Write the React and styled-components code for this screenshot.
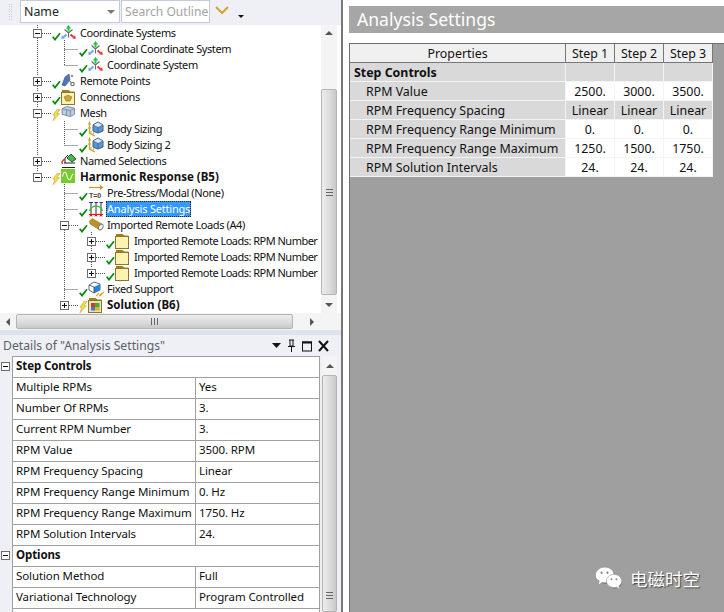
import React from 'react';
import styled, { createGlobalStyle } from 'styled-components';

const Global = createGlobalStyle`
  html, body { margin: 0; padding: 0; width: 724px; height: 612px; overflow: hidden; background: #fff; }
  #root { width: 724px; height: 612px; }
  * { box-sizing: border-box; }
`;

const FONT = `"Noto Sans", Tahoma, "Noto Sans CJK SC", sans-serif`;

const Page = styled.div`
  display: flex; width: 724px; height: 612px; overflow: hidden; background: #fff; position: relative;
  font-family: ${FONT}; color: #111;
`;
const LeftPane = styled.div`
  width: 341px; flex: none; display: flex; flex-direction: column; background: #eef0f6;
`;
const Toolbar = styled.div`
  height: 25px; flex: none; display: flex; align-items: flex-start; background: #eef0f6; padding-left: 8px;
`;
const Grip = styled.div`
  width: 5px; height: 18px; margin: 3px 7px 0 0;
  background-image: radial-gradient(#a9adb8 0.7px, transparent 0.8px);
  background-size: 2.5px 2.5px;
`;
const NameSelect = styled.div`
  width: 100px; height: 23px; background: #fff; border: 1px solid #c6cbdc; display: flex; align-items: center;
  justify-content: space-between; padding: 0 4px 0 3px; font-size: 12.4px; color: #222;
`;
const SelectCaret = styled.span`
  width: 0; height: 0; border-left: 4px solid transparent; border-right: 4px solid transparent; border-top: 4px solid #777;
`;
const SearchBox = styled.div`
  width: 89px; height: 23px; margin-left: 1px; background: #fff; border: 1px solid #c6cbdc; display: flex; align-items: center;
  padding-left: 3px; font-size: 12.1px; color: #a3a3a3; white-space: nowrap; overflow: hidden;
`;
const ToolIcon = styled.svg`
  flex: none; margin: 5px 0 0 5px;
`;
const BlackCaret = styled.span`
  width: 0; height: 0; margin: 15px 0 0 9px; border-left: 3px solid transparent; border-right: 3px solid transparent; border-top: 3px solid #111;
`;
const TreeArea = styled.div`
  height: 288px; flex: none; display: flex; background: #fff; position: relative;
`;
const TreeRows = styled.div`
  width: 321px; flex: none; overflow: hidden; position: relative;
`;
const Guides = styled.svg`
  position: absolute; left: 0; top: 0; pointer-events: none;
`;
const Row = styled.div`
  height: 16px; display: flex; align-items: center; padding-left: ${p => 33 + p.$level * 27}px; position: relative;
  white-space: nowrap; font-size: 11px; line-height: 16px;
`;
const ExpSlot = styled.div`
  width: 19px; flex: none;
`;
const ExpBox = styled.div`
  width: 9px; height: 9px; border: 1px solid #6e6e6e; background: #fff; position: relative;
  &::before { content: ''; position: absolute; left: 1px; right: 1px; top: 3px; height: 1px; background: #111; }
  &::after { content: ''; display: ${p => p.$plus ? 'block' : 'none'}; position: absolute; top: 1px; bottom: 1px; left: 3px; width: 1px; background: #111; }
`;
const StatusSlot = styled.div`
  width: 9px; height: 16px; flex: none; display: flex; align-items: flex-end; position: relative;
`;
const IconSlot = styled.div`
  width: 16px; height: 16px; flex: none; margin-right: 3px; display: flex; align-items: flex-start;
`;
const Label = styled.span`
  font-weight: ${p => p.$bold ? 700 : 400};
  font-size: ${p => p.$bold ? 11.5 : 11}px;
  letter-spacing: ${p => p.$bold ? 0 : p.$selected ? -0.2 : p.$level === 2 ? -0.52 : -0.4}px;
  color: ${p => p.$selected ? '#fff' : '#111'};
  background: ${p => p.$selected ? '#3399ff' : 'transparent'};
  outline: ${p => p.$selected ? '1px dotted #222' : 'none'};
  outline-offset: -1px;
  height: 16px; line-height: 15px;
  padding: ${p => p.$selected ? '0 1px' : '0'};
  margin-left: ${p => p.$selected ? '-1px' : '0'};
`;

const VScroll = styled.div`
  width: 16px; flex: none; display: flex; flex-direction: column; align-items: stretch; background: #f4f4f4; position: relative;
`;
const ArrowCell = styled.div`
  height: ${p => p.$h || 16}px; flex: none; display: flex; align-items: center; justify-content: center;
`;
const TriUp = styled.span`
  width: 0; height: 0; border-left: 4px solid transparent; border-right: 4px solid transparent; border-bottom: 4px solid #555;
`;
const TriDown = styled(TriUp)`
  border-bottom: 0; border-top: 4px solid #555;
`;
const TriLeft = styled.span`
  width: 0; height: 0; border-top: 4px solid transparent; border-bottom: 4px solid transparent; border-right: 4px solid #555;
`;
const TriRight = styled(TriLeft)`
  border-right: 0; border-left: 4px solid #555;
`;
const VTrack = styled.div`
  flex: 1; min-height: 0; display: flex; flex-direction: column; padding-top: ${p => p.$top}px; padding-bottom: ${p => p.$bottom}px;
`;
const VThumb = styled.div`
  flex: 1; border: 1px solid #b4b4b4; border-radius: 2px; background: linear-gradient(to right, #ececec, #dcdcdc 55%, #c9c9c9);
  display: flex; flex-direction: column; align-items: center; justify-content: ${p => p.$end ? 'flex-end' : 'center'};
  padding-bottom: ${p => p.$end ? 12 : 0}px;
`;
const HGrip = styled.div`
  width: 7px; height: 7px; background: repeating-linear-gradient(to bottom, #666 0 1px, transparent 1px 3px);
`;
const HScroll = styled.div`
  height: 17px; flex: none; display: flex; align-items: center; background: #f4f4f4; border-right: 4px solid #f4f4f4;
`;
const HTrack = styled.div`
  width: 277px; height: 15px; flex: none; border: 1px solid #b4b4b4; border-radius: 2px;
  background: linear-gradient(to bottom, #ececec, #dcdcdc 55%, #c9c9c9); display: flex; align-items: center; justify-content: center;
`;
const VGrip = styled.div`
  width: 7px; height: 7px; background: repeating-linear-gradient(to right, #666 0 1px, transparent 1px 3px);
`;
const HArrow = styled.div`
  width: ${p => p.$w}px; flex: none; display: flex; justify-content: center;
`;
const HEnd = styled.div`
  flex: 1;
`;
const PaneGap = styled.div`
  height: 5px; flex: none; background: #dfe2ec;
`;
const DetailsHead = styled.div`
  height: 21px; flex: none; display: flex; align-items: center; padding: 0 5px 0 3px; font-size: 12.2px; color: #5b5f68; background: #eef0f6;
`;
const DetailsTitle = styled.span`
  white-space: nowrap; width: 162px; flex: none;
`;
const DotStrip = styled.div`
  width: 95px; height: 6px; margin-left: 8px;
  background-image: radial-gradient(#a9adb8 0.6px, transparent 0.7px);
  background-size: 2px 2px;
`;
const HeadIcons = styled.svg`
  margin-left: 4px; flex: none;
`;
const DetailsBody = styled.div`
  flex: 1; min-height: 0; display: flex; overflow: hidden;
`;
const Gutter = styled.div`
  width: 12px; flex: none; display: flex; flex-direction: column;
`;
const GutterCell = styled.div`
  height: ${p => p.$rows * 21}px; flex: none; padding: 6px 0 0 1px;
`;
const DetailsGrid = styled.div`
  width: 308px; flex: none; background: #fff; border: solid #a0a0a0; border-width: 1px 1px 0 1px;
`;
const DRow = styled.div`
  display: grid; grid-template-columns: ${p => p.$head ? '1fr' : '182px 1fr'}; height: 21px; border-bottom: 1px solid #a0a0a0;
  font-size: 11.5px; line-height: 18px; letter-spacing: -0.1px;
  font-weight: ${p => p.$head ? 700 : 400};
`;
const DCell = styled.div`
  padding-left: 3px; white-space: nowrap; overflow: hidden;
  & + & { border-left: 1px solid #a0a0a0; }
`;
const ScrollWrap = styled.div`
  width: 15px; margin-left: 2px; flex: none; display: flex; flex-direction: column; background: #f4f4f4;
`;
const Divider = styled.div`
  width: 2px; flex: none; background: #777;
`;
const RightPane = styled.div`
  flex: 1; min-width: 0; display: flex; flex-direction: column; padding-left: 6px;
`;
const Banner = styled.div`
  height: 27px; margin-top: 6px; flex: none; background: #a6a6a6; color: #fff; font-size: 17.6px; line-height: 26px; padding-left: 8px;
`;
const Canvas = styled.div`
  flex: 1; margin-top: 10px; background: #9f9f9f; border-top: 1px solid #6f6f6f; border-left: 1px solid #6f6f6f;
`;
const StepTable = styled.div`
  display: grid; grid-template-columns: 216px 49px 49px 49px; width: 363px;
  font-size: 12.4px;
`;
const StepCell = styled.div`
  height: 19px; line-height: 19px;
  background: ${p => p.$header ? '#f0f0f0' : p.$white ? '#fff' : '#d9d9d9'};
  border-right: 1px solid ${p => p.$header ? '#777' : '#f4f4f4'};
  border-bottom: 1px solid ${p => p.$header ? '#777' : '#f4f4f4'};
  text-align: ${p => p.$align || 'center'};
  padding-left: ${p => p.$pad || 0}px;
  font-weight: ${p => p.$bold ? 700 : 400};
  white-space: nowrap; overflow: hidden; color: #111;
`;
const Watermark = styled.div`
  position: absolute; left: 595px; top: 566px; display: flex; align-items: center; gap: 7px;
  color: #fff; font-size: 17.5px; font-family: "Noto Sans CJK SC", sans-serif;
  text-shadow: 1px 1px 1px #444;
`;

/* icons */
const Check = () => (
  <svg width="9" height="9" viewBox="0 0 9 9"><path d="M0.7 4.8 L3 7.6 L8 1.2" fill="none" stroke="#0a8a12" strokeWidth="1.8" /></svg>
);
const Bolt = () => (
  <svg width="9" height="12" viewBox="0 0 9 12"><path d="M5.5 0 L8 0.5 L5 4.5 L7.5 4.8 L1 11.8 L3 6.5 L1 6 Z" fill="#f6df4a" stroke="#b78f10" strokeWidth="0.5" /></svg>
);
const Coord = () => (
  <svg width="15" height="15" viewBox="0 0 15 15">
    <path d="M3.5 4.5 L7.5 8 L11.5 4.5 M7.5 8 V12.5" fill="none" stroke="#6a6a6a" strokeWidth="1.1" />
    <path d="M7.5 3 V6.5" stroke="#22c743" strokeWidth="2" />
    <path d="M4.8 3.4 L7.5 0 L10.2 3.4 Z" fill="#22c743" />
    <path d="M5.5 9.5 L2.5 12" stroke="#6aa6ea" strokeWidth="2" />
    <path d="M0.3 14 L0.8 10.2 L3.8 13.2 Z" fill="#6aa6ea" />
    <path d="M9.5 9.5 L12.5 12" stroke="#e2353a" strokeWidth="2" />
    <path d="M14.7 14 L14.2 10.2 L11.2 13.2 Z" fill="#e2353a" />
  </svg>
);
const Remote = () => (
  <svg width="16" height="16" viewBox="0 0 16 16">
    <path d="M1 12 L4 4 L8 1 L9 7 L4 13 Z" fill="#4f74b8" stroke="#2f4b80" strokeWidth="0.6" />
    <circle cx="11" cy="3" r="1.3" fill="#999" /><circle cx="11.5" cy="11" r="1.7" fill="none" stroke="#777" strokeWidth="1.2" />
    <path d="M8 7 L10.5 10" stroke="#777" />
  </svg>
);
const Folder = ({ children, fill = '#fdf3b0' }) => (
  <svg width="15" height="16" viewBox="0 0 15 16">
    <path d="M1 3 V1 H7.5 L9.5 2.5 H13.5 V4 H1 Z" fill="#a47d1c" />
    <rect x="0.5" y="3.5" width="13" height="12" fill={fill} stroke="#8d7430" />
    {children}
  </svg>
);
const Connections = () => (
  <Folder><path d="M3 8 L7 6 L11 8 L9 12 L5 12 Z" fill="#c9a83a" stroke="#8a6e1c" strokeWidth="0.6" /></Folder>
);
const SolutionIco = () => (
  <Folder fill="#e8e1b5"><rect x="3" y="6" width="4" height="4" fill="#d23a2a" /><rect x="7" y="6" width="4.5" height="4" fill="#3bb03b" /><rect x="3" y="10" width="4" height="3.5" fill="#3a7bd5" /><rect x="7" y="10" width="4.5" height="3.5" fill="#d9b52a" /></Folder>
);
const Mesh = () => (
  <svg width="15" height="13" viewBox="0 0 16 14">
    <path d="M1 4 L6 1.5 L14.5 3.5 L14.5 10 L10 12.5 L1 10 Z" fill="#b9cfe8" stroke="#7a8797" />
    <path d="M1 4 L10 6 L14.5 3.5 M10 6 V12.5 M6 5 V11" fill="none" stroke="#7a8797" />
  </svg>
);
const Sizing = () => (
  <svg width="16" height="16" viewBox="0 0 16 16">
    <path d="M1.5 0.5 V12 L7 15" fill="none" stroke="#caa02b" strokeWidth="1.3" />
    <path d="M0 3 H3 M0 7 H3 M2 11 H4 M5 13 L6 11" stroke="#caa02b" />
    <path d="M5 4 L10 1 L15 4 V10 L10 12 L5 10 Z" fill="#5b95d3" stroke="#3c5e86" />
    <path d="M5 4 L10 6.5 L15 4 L10 1 Z" fill="#dbe9f7" stroke="#3c5e86" strokeWidth="0.7" />
    <path d="M10 6.5 V12" stroke="#3c5e86" strokeWidth="0.7" />
  </svg>
);
const Named = () => (
  <svg width="16" height="16" viewBox="0 0 16 16">
    <path d="M6 5 L10 1 L15 6 L11 9 Z" fill="#3fbe4a" stroke="#222" strokeWidth="0.8" />
    <path d="M3 10 H14 M1 14.5 H14 M4 10 V5 L7 2" fill="none" stroke="#222" />
    <path d="M1.5 11 A3 3 0 0 1 4 6.5" fill="none" stroke="#d8342c" strokeWidth="1.4" />
  </svg>
);
const Harmonic = () => (
  <svg width="14" height="14" viewBox="0 0 14 14">
    <rect width="14" height="14" fill="#76cc2b" />
    <path d="M1.5 7.5 C2.5 2 5 2 6 7 C7 12 9.5 12 10.5 7.5 C11 6 11.5 5 12.5 5" fill="none" stroke="#fff" strokeWidth="1.1" />
  </svg>
);
const PreStress = () => (
  <svg width="16" height="16" viewBox="0 0 16 16">
    <path d="M1 2.5 H13" stroke="#c99a2e" strokeWidth="1.2" />
    <path d="M12 0 L15.5 2.5 L12 5 Z" fill="#c99a2e" />
    <text x="1" y="13" fontSize="7" fontWeight="700" fill="#444" fontFamily="Liberation Sans">T=0</text>
  </svg>
);
const Settings = () => (
  <svg width="16" height="16" viewBox="0 0 16 16">
    <path d="M1 1.5 H5 M6.5 1.5 H10 M11.5 1.5 H15" stroke="#2a2ad8" />
    <path d="M3 1.5 V13 M8 1.5 V13 M13 1.5 V13" stroke="#333" />
    <path d="M1 13.5 H15" stroke="#e01919" strokeWidth="1.2" />
    <path d="M2 15.5 L3 13.5 L4 15.5 M7 15.5 L8 13.5 L9 15.5 M12 15.5 L13 13.5 L14 15.5" fill="none" stroke="#e01919" />
    <path d="M1.5 10 C4 3.5 12 3.5 14.5 10" fill="none" stroke="#33bb33" strokeWidth="1.4" />
  </svg>
);
const Imported = () => (
  <svg width="16" height="15" viewBox="0 0 16 15">
    <path d="M1.5 4 L4 1.5 L14 7 L11 12.5 L2 7 Z" fill="#bd9328" stroke="#85661a" strokeWidth="0.5" />
    <ellipse cx="12.8" cy="10" rx="2" ry="3" transform="rotate(30 12.8 10)" fill="#fff" stroke="#777" />
  </svg>
);
const LoadFolder = () => <Folder />;
const Fixed = () => (
  <svg width="16" height="16" viewBox="0 0 16 16">
    <path d="M1 4 L6 1 L12 3 V9 L6 12 L1 9 Z" fill="#fff" stroke="#444" strokeWidth="0.8" />
    <path d="M6 6 L12 3 V9 L6 12 Z" fill="#1f87e0" />
    <path d="M1 4 L6 6 V12" fill="none" stroke="#444" strokeWidth="0.8" />
    <path d="M8 15 L11 12 M11 15 L14 12 M12 15 L16 11" stroke="#d7ad2d" strokeWidth="1.2" />
  </svg>
);

const rows = [
  { l: 0, e: '-', s: 'c', I: Coord, t: 'Coordinate Systems' },
  { l: 1, s: 'c', I: Coord, t: 'Global Coordinate System' },
  { l: 1, s: 'c', I: Coord, t: 'Coordinate System' },
  { l: 0, e: '+', s: 'c', I: Remote, t: 'Remote Points' },
  { l: 0, e: '+', s: 'c', I: Connections, t: 'Connections' },
  { l: 0, e: '-', s: 'b', I: Mesh, t: 'Mesh' },
  { l: 1, s: 'c', I: Sizing, t: 'Body Sizing' },
  { l: 1, s: 'c', I: Sizing, t: 'Body Sizing 2' },
  { l: 0, e: '+', I: Named, t: 'Named Selections' },
  { l: 0, e: '-', s: 'b', I: Harmonic, t: 'Harmonic Response (B5)', bold: true },
  { l: 1, s: 'c', I: PreStress, t: 'Pre-Stress/Modal (None)' },
  { l: 1, s: 'c', I: Settings, t: 'Analysis Settings', sel: true },
  { l: 1, e: '-', s: 'c', I: Imported, t: 'Imported Remote Loads (A4)' },
  { l: 2, e: '+', s: 'c', I: LoadFolder, t: 'Imported Remote Loads: RPM Number' },
  { l: 2, e: '+', s: 'c', I: LoadFolder, t: 'Imported Remote Loads: RPM Number' },
  { l: 2, e: '+', s: 'c', I: LoadFolder, t: 'Imported Remote Loads: RPM Number' },
  { l: 1, s: 'c', I: Fixed, t: 'Fixed Support' },
  { l: 1, e: '+', s: 'b', I: SolutionIco, t: 'Solution (B6)', bold: true },
];

const guidePath = [
  'M37.5 0 V3', 'M37.5 13 V51', 'M37.5 61 V67', 'M37.5 77 V83', 'M37.5 93 V131', 'M37.5 141 V147',
  'M42 8.5 H52', 'M42 56.5 H52', 'M42 72.5 H52', 'M42 88.5 H52', 'M42 136.5 H52', 'M42 152.5 H52',
  'M64.5 15 V40.5', 'M64.5 24.5 H78', 'M64.5 40.5 H78',
  'M64.5 96 V120.5', 'M64.5 104.5 H78', 'M64.5 120.5 H78',
  'M64.5 159 V195', 'M64.5 205 V275', 'M64.5 168.5 H78', 'M64.5 184.5 H78', 'M69 200.5 H78', 'M64.5 264.5 H78', 'M69 280.5 H78',
  'M91.5 207 V211', 'M91.5 221 V227', 'M91.5 237 V243',
  'M96 216.5 H105', 'M96 232.5 H105', 'M96 248.5 H105',
].join(' ');

const detailGroups = [
  { title: 'Step Controls', items: [
    ['Multiple RPMs', 'Yes'], ['Number Of RPMs', '3.'], ['Current RPM Number', '3.'], ['RPM Value', '3500. RPM'],
    ['RPM Frequency Spacing', 'Linear'], ['RPM Frequency Range Minimum', '0. Hz'], ['RPM Frequency Range Maximum', '1750. Hz'], ['RPM Solution Intervals', '24.'],
  ] },
  { title: 'Options', items: [['Solution Method', 'Full'], ['Variational Technology', 'Program Controlled']] },
];

const steps = [
  ['RPM Value', ['2500.', '3000.', '3500.'], true],
  ['RPM Frequency Spacing', ['Linear', 'Linear', 'Linear'], false],
  ['RPM Frequency Range Minimum', ['0.', '0.', '0.'], true],
  ['RPM Frequency Range Maximum', ['1250.', '1500.', '1750.'], true],
  ['RPM Solution Intervals', ['24.', '24.', '24.'], true],
];

const Wechat = () => (
  <svg width="28" height="25" viewBox="0 0 34 28">
    <g fill="#444" opacity="0.6" transform="translate(1 1)">
      <ellipse cx="12" cy="10" rx="11" ry="9.5" /><ellipse cx="23" cy="17" rx="9" ry="8" />
    </g>
    <path d="M12 0.5 C18 0.5 23 4.5 23 10 C23 15.5 18 19 12 19 C10.5 19 9.5 18.8 8.5 18.5 L4.5 21 L5.5 17 C2.5 15.2 1 12.8 1 10 C1 4.5 6 0.5 12 0.5 Z" fill="#fff" />
    <path d="M23 9 C28 9 32.5 12.5 32.5 17 C32.5 19.5 31 21.5 29 23 L30 26.5 L26 24.5 C25 24.8 24 25 23 25 C18 25 14 21.5 14 17 C14 12.5 18 9 23 9 Z" fill="#fff" stroke="#9f9f9f" strokeWidth="0.8" />
    <circle cx="8" cy="7" r="1.4" fill="#888" /><circle cx="15" cy="7" r="1.4" fill="#888" />
    <circle cx="20" cy="15" r="1.2" fill="#888" /><circle cx="26" cy="15" r="1.2" fill="#888" />
  </svg>
);

export default function App() {
  return (
    <Page>
      <Global />
      <LeftPane>
        <Toolbar>
          <Grip />
          <NameSelect>Name<SelectCaret /></NameSelect>
          <SearchBox>Search Outline</SearchBox>
          <ToolIcon width="14" height="10" viewBox="0 0 14 10"><path d="M1 2 L7 8 L13 2" fill="none" stroke="#d0a52e" strokeWidth="2" /></ToolIcon>
          <BlackCaret />
        </Toolbar>
        <TreeArea>
          <TreeRows>
            <Guides width="120" height="288" viewBox="0 0 120 288">
              <path d={guidePath} fill="none" stroke="#555" strokeDasharray="1 1" />
            </Guides>
            {rows.map((r, i) => (
              <Row key={i} $level={r.l}>
                <ExpSlot>{r.e && <ExpBox $plus={r.e === '+'} />}</ExpSlot>
                <StatusSlot>{r.s === 'c' ? <Check /> : r.s === 'b' ? <Bolt /> : null}</StatusSlot>
                <IconSlot><r.I /></IconSlot>
                <Label $bold={r.bold} $selected={r.sel} $level={r.l}>{r.t}</Label>
              </Row>
            ))}
          </TreeRows>
          <VScroll>
            <ArrowCell><TriUp /></ArrowCell>
            <VTrack $top={48} $bottom={2}>
              <VThumb><HGrip /></VThumb>
            </VTrack>
            <ArrowCell><TriDown /></ArrowCell>
          </VScroll>
        </TreeArea>
        <HScroll>
          <HArrow $w={16}><TriLeft /></HArrow>
          <HTrack><VGrip /></HTrack>
          <HArrow $w={38}><TriRight /></HArrow>
          <HEnd />
        </HScroll>
        <PaneGap />
        <DetailsHead>
          <DetailsTitle>Details of "Analysis Settings"</DetailsTitle>
          <DotStrip />
          <HeadIcons width="58" height="14" viewBox="0 0 58 14">
            <path d="M0 4 H9 L4.5 9 Z" fill="#111" />
            <path d="M17 1 H22 M18 1 V7 H21 V1 M16 7.5 H23 M19.5 8 V13" fill="none" stroke="#111" />
            <rect x="30.5" y="3" width="9" height="9" fill="none" stroke="#111" /><path d="M30 3.5 H40" stroke="#111" strokeWidth="2" />
            <path d="M47 2 L56 12 M56 2 L47 12" stroke="#111" strokeWidth="2" />
          </HeadIcons>
        </DetailsHead>
        <DetailsBody>
          <Gutter>
            {detailGroups.map(g => (
              <GutterCell key={g.title} $rows={g.items.length + 1}><ExpBox /></GutterCell>
            ))}
          </Gutter>
          <DetailsGrid>
            {detailGroups.map(g => (
              <React.Fragment key={g.title}>
                <DRow $head><DCell>{g.title}</DCell></DRow>
                {g.items.map(([a, b]) => (
                  <DRow key={a}><DCell>{a}</DCell><DCell>{b}</DCell></DRow>
                ))}
              </React.Fragment>
            ))}
            <DRow />
          </DetailsGrid>
          <ScrollWrap>
            <ArrowCell $h={19}><TriUp /></ArrowCell>
            <VTrack $top={0} $bottom={0}>
              <VThumb $end><HGrip /></VThumb>
            </VTrack>
          </ScrollWrap>
        </DetailsBody>
      </LeftPane>
      <Divider />
      <RightPane>
        <Banner>Analysis Settings</Banner>
        <Canvas>
          <StepTable>
            <StepCell $header>Properties</StepCell>
            <StepCell $header>Step 1</StepCell>
            <StepCell $header>Step 2</StepCell>
            <StepCell $header>Step 3</StepCell>
            <StepCell $align="left" $pad={4} $bold>Step Controls</StepCell>
            <StepCell /><StepCell /><StepCell />
            {steps.map(([name, vals, white]) => (
              <React.Fragment key={name}>
                <StepCell $align="left" $pad={16}>{name}</StepCell>
                {vals.map((v, i) => <StepCell key={i} $white={white}>{v}</StepCell>)}
              </React.Fragment>
            ))}
          </StepTable>
        </Canvas>
      </RightPane>
      <Watermark><Wechat />电磁时空</Watermark>
    </Page>
  );
}
